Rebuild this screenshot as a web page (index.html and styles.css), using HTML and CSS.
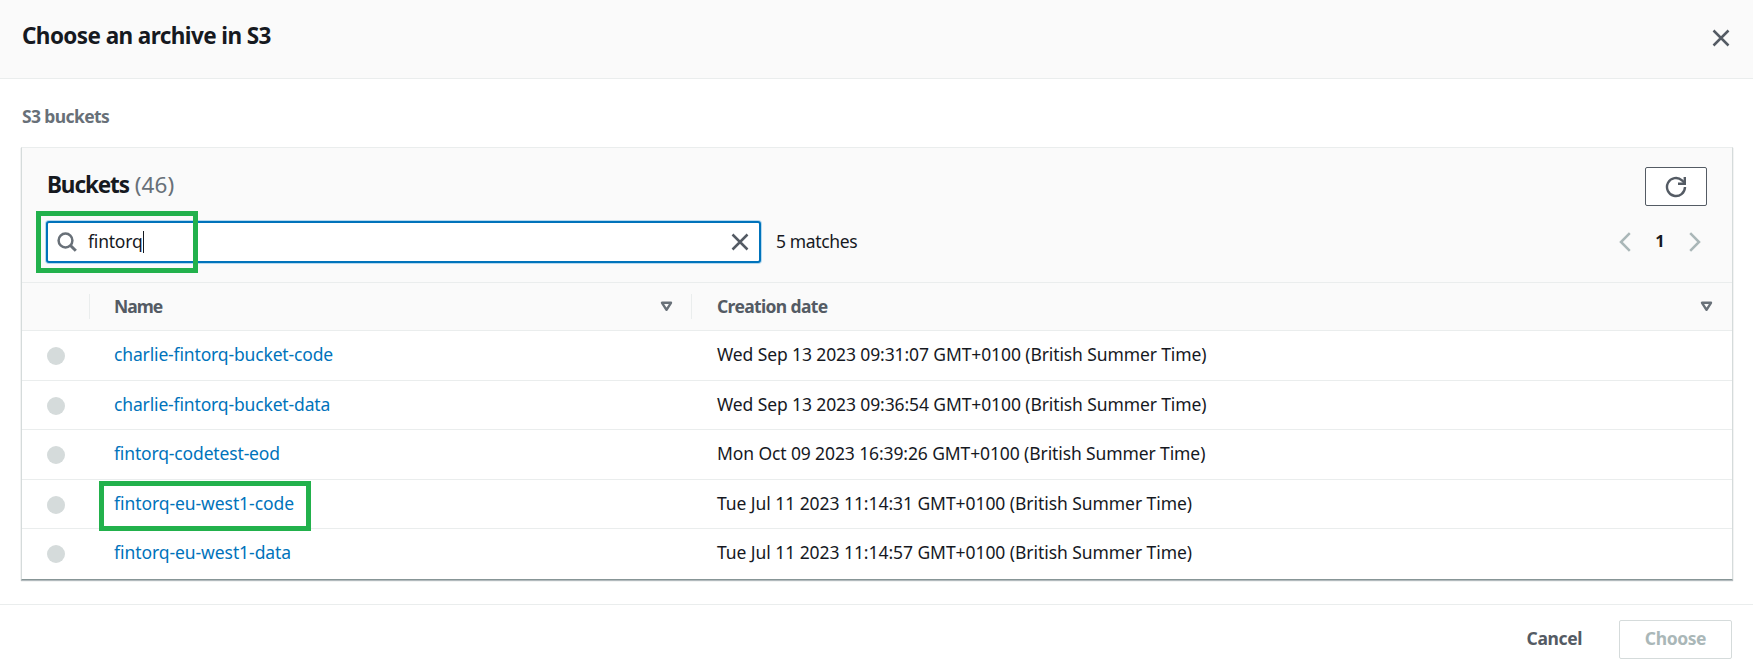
FILE: index.html
```html
<!DOCTYPE html>
<html lang="en">
<head>
<meta charset="utf-8">
<title>Choose an archive in S3</title>
<link rel="stylesheet" href="styles.css">
</head>
<body>
<div class="modal">
  <header class="modal-header">
    <h1 class="modal-title">Choose an archive in S3</h1>
    <button class="icon-button" aria-label="Close"><svg width="18" height="18" viewBox="0 0 18 18"><path d="M1.5 1.5l15 15M16.5 1.5l-15 15" fill="none" stroke="#545b64" stroke-width="2.5"/></svg></button>
  </header>
  <main class="modal-body">
    <p class="breadcrumb">S3 buckets</p>
    <section class="panel">
      <div class="panel-header">
        <div class="title-row">
          <h2 class="panel-title">Buckets <span class="count">(46)</span></h2>
          <button class="refresh" aria-label="Refresh"><svg width="22" height="22" viewBox="0 0 22 22" fill="none" stroke="#545b64" stroke-width="2.4"><path d="M20 11a9 9 0 1 1-3-6.700l2.200 2.200"/><path d="M13 7.800h6.800V1"/></svg></button>
        </div>
        <div class="filter-row">
          <div class="search">
            <svg width="20" height="20" viewBox="0 0 20 20" fill="none" stroke="#687078" stroke-width="2.5"><circle cx="8.500" cy="8.500" r="6.900"/><path d="M13 13l5.800 5.800" stroke-width="3"/></svg>
            <span class="query">fintorq</span>
            <svg class="clear" width="18" height="18" viewBox="0 0 18 18"><path d="M1.5 1.5l15 15M16.5 1.5l-15 15" fill="none" stroke="#545b64" stroke-width="2.5"/></svg>
            <span class="highlight highlight-search"></span>
          </div>
          <span class="matches">5 matches</span>
          <nav class="pager">
            <svg width="12" height="20" viewBox="0 0 12 20" fill="none" stroke="#aab7b8" stroke-width="2.5"><path d="M10.800 1.200L2 10l8.800 8.800"/></svg>
            <span class="page">1</span>
            <svg width="12" height="20" viewBox="0 0 12 20" fill="none" stroke="#aab7b8" stroke-width="2.5"><path d="M1.200 1.200L10 10l-8.800 8.800"/></svg>
          </nav>
        </div>
      </div>
      <div class="table">
        <div class="row head">
          <div class="cell select"></div>
          <div class="cell name"><span class="label">Name</span><svg width="13" height="11" viewBox="0 0 13 11"><path d="M2 1.800h9L6.500 8.800z" fill="none" stroke="#687078" stroke-width="2.400" stroke-linejoin="round"/></svg></div>
          <div class="cell date"><span class="label">Creation date</span><svg width="13" height="11" viewBox="0 0 13 11"><path d="M2 1.800h9L6.500 8.800z" fill="none" stroke="#687078" stroke-width="2.400" stroke-linejoin="round"/></svg></div>
        </div>
        <div class="row"><div class="cell select"><i class="radio"></i></div><div class="cell name"><a class="link">charlie-fintorq-bucket-code</a></div><div class="cell date">Wed Sep 13 2023 09:31:07 GMT+0100 (British Summer Time)</div></div>
        <div class="row"><div class="cell select"><i class="radio"></i></div><div class="cell name"><a class="link">charlie-fintorq-bucket-data</a></div><div class="cell date">Wed Sep 13 2023 09:36:54 GMT+0100 (British Summer Time)</div></div>
        <div class="row"><div class="cell select"><i class="radio"></i></div><div class="cell name"><a class="link">fintorq-codetest-eod</a></div><div class="cell date">Mon Oct 09 2023 16:39:26 GMT+0100 (British Summer Time)</div></div>
        <div class="row"><div class="cell select"><i class="radio"></i></div><div class="cell name"><a class="link west">fintorq-eu-west1-code</a><span class="highlight highlight-name"></span></div><div class="cell date july">Tue Jul 11 2023 11:14:31 GMT+0100 (British Summer Time)</div></div>
        <div class="row"><div class="cell select"><i class="radio"></i></div><div class="cell name"><a class="link west">fintorq-eu-west1-data</a></div><div class="cell date july">Tue Jul 11 2023 11:14:57 GMT+0100 (British Summer Time)</div></div>
      </div>
    </section>
  </main>
  <footer class="modal-footer">
    <button class="cancel">Cancel</button>
    <button class="choose">Choose</button>
  </footer>
</div>
</body>
</html>
```
FILE: styles.css
```css
* { box-sizing: border-box; }
body {
  margin: 0;
  background: #fff;
  color: #16191f;
  font: 17.5px/28px "Noto Sans", "Open Sans", sans-serif;
}
button { font: inherit; padding: 0; border: 0; background: none; }
svg { display: block; flex: none; }
h1, h2, p { margin: 0; }

.modal { display: flex; flex-direction: column; height: 671px; overflow: hidden; }
.modal-header {
  display: flex;
  justify-content: space-between;
  align-items: flex-start;
  height: 79px;
  padding: 22px 23px 0 22px;
  background: #fafafa;
  border-bottom: 1px solid #eaeded;
}
.modal-title { font-size: 22.5px; font-weight: 700; letter-spacing: -0.59px; }
.icon-button { margin-top: 7px; }

.modal-body { padding: 23px 20px 0 21px; height: 525px; }
.breadcrumb { padding-left: 1px; color: #687078; font-weight: 700; letter-spacing: -0.62px; }

.panel {
  margin-top: 17px;
  height: 433px;
  border: 1px solid #d5dbdb;
  border-top-color: #eaeded;
  border-bottom-color: #879596;
  box-shadow: 0 1px 1px rgba(0, 28, 36, 0.3);
}
.panel-header { height: 135px; padding: 19px 25px 0 24px; background: #fafafa; border-bottom: 1px solid #eaeded; }
.title-row { display: flex; justify-content: space-between; height: 54px; }
.panel-title { padding: 4px 0 0 1px; font-size: 22.5px; font-weight: 700; letter-spacing: -1.1px; }
.count { color: #687078; font-weight: 400; letter-spacing: 0.1px; margin-left: 1px; }
.refresh {
  display: grid;
  place-items: center;
  width: 62px;
  height: 39px;
  background: #fff;
  border: 1px solid #545b64;
  border-radius: 2px;
}
.filter-row { display: flex; align-items: center; height: 42px; }
.search {
  position: relative;
  display: flex;
  align-items: center;
  width: 715px;
  height: 42px;
  padding: 0 10px 0 9px;
  background: #fff;
  border: 2px solid #0073bb;
  border-radius: 3px;
  box-shadow: 0 0 0 1px #b5d9ef;
}
.query { margin-left: 11px; height: 22px; line-height: 21px; letter-spacing: -0.2px; border-right: 1px solid #16191f; }
.clear { margin-left: auto; }
.matches { margin: -3px 0 0 15px; letter-spacing: -0.35px; }
.pager { display: flex; align-items: center; margin: 0 6px 0 auto; }
.page { width: 58px; text-align: center; font-size: 16.5px; font-weight: 700; margin-top: -2px; }

.row {
  display: grid;
  grid-template-columns: 68px 602px 1fr;
  align-items: start;
  height: 50px;
  padding-top: 11px;
  border-bottom: 1px solid #eaeded;
}
.row:nth-child(odd) { height: 49px; }
.row.head { height: 48px; background: #fafafa; color: #545b64; font-weight: 700; }
.row:last-child { height: 50px; border-bottom: 0; }
.cell { position: relative; display: flex; align-items: center; padding-left: 25px; height: 28px; }
.head .cell { justify-content: space-between; height: 25px; }
.head .select, .head .name { border-right: 1px solid #eaeded; }
.head .name { padding-right: 18px; letter-spacing: -1px; }
.head .date { padding-right: 19px; letter-spacing: -0.65px; }
.label { margin-top: -2px; }
.row:not(.head) .name, .row:not(.head) .date { top: -2px; }
.cell.name { padding-left: 24px; }
.cell.date { padding-left: 25px; }
.date { letter-spacing: -0.11px; }
.july { letter-spacing: -0.06px; }
.radio { width: 18px; height: 18px; border-radius: 50%; background: #d5dbdb; }
.link { color: #0073bb; letter-spacing: -0.15px; }
.west { letter-spacing: -0.07px; }

.highlight { position: absolute; border: 5px solid #22b14c; }
.highlight-search { left: -12px; top: -12px; width: 162px; height: 62px; }
.highlight-name { left: 9px; top: -8px; width: 212px; height: 50px; z-index: 1; }

.modal-footer {
  display: flex;
  justify-content: flex-end;
  align-items: flex-start;
  height: 67px;
  padding: 15px 21px 0 0;
  border-top: 1px solid #eaeded;
  font-weight: 700;
  letter-spacing: -0.4px;
}
.cancel, .choose { height: 39px; letter-spacing: -0.4px; padding-bottom: 3px; }
.cancel { color: #545b64; margin-right: 37px; }
.choose { width: 113px; color: #aab7b8; border: 1px solid #d5dbdb; border-radius: 2px; }
```
